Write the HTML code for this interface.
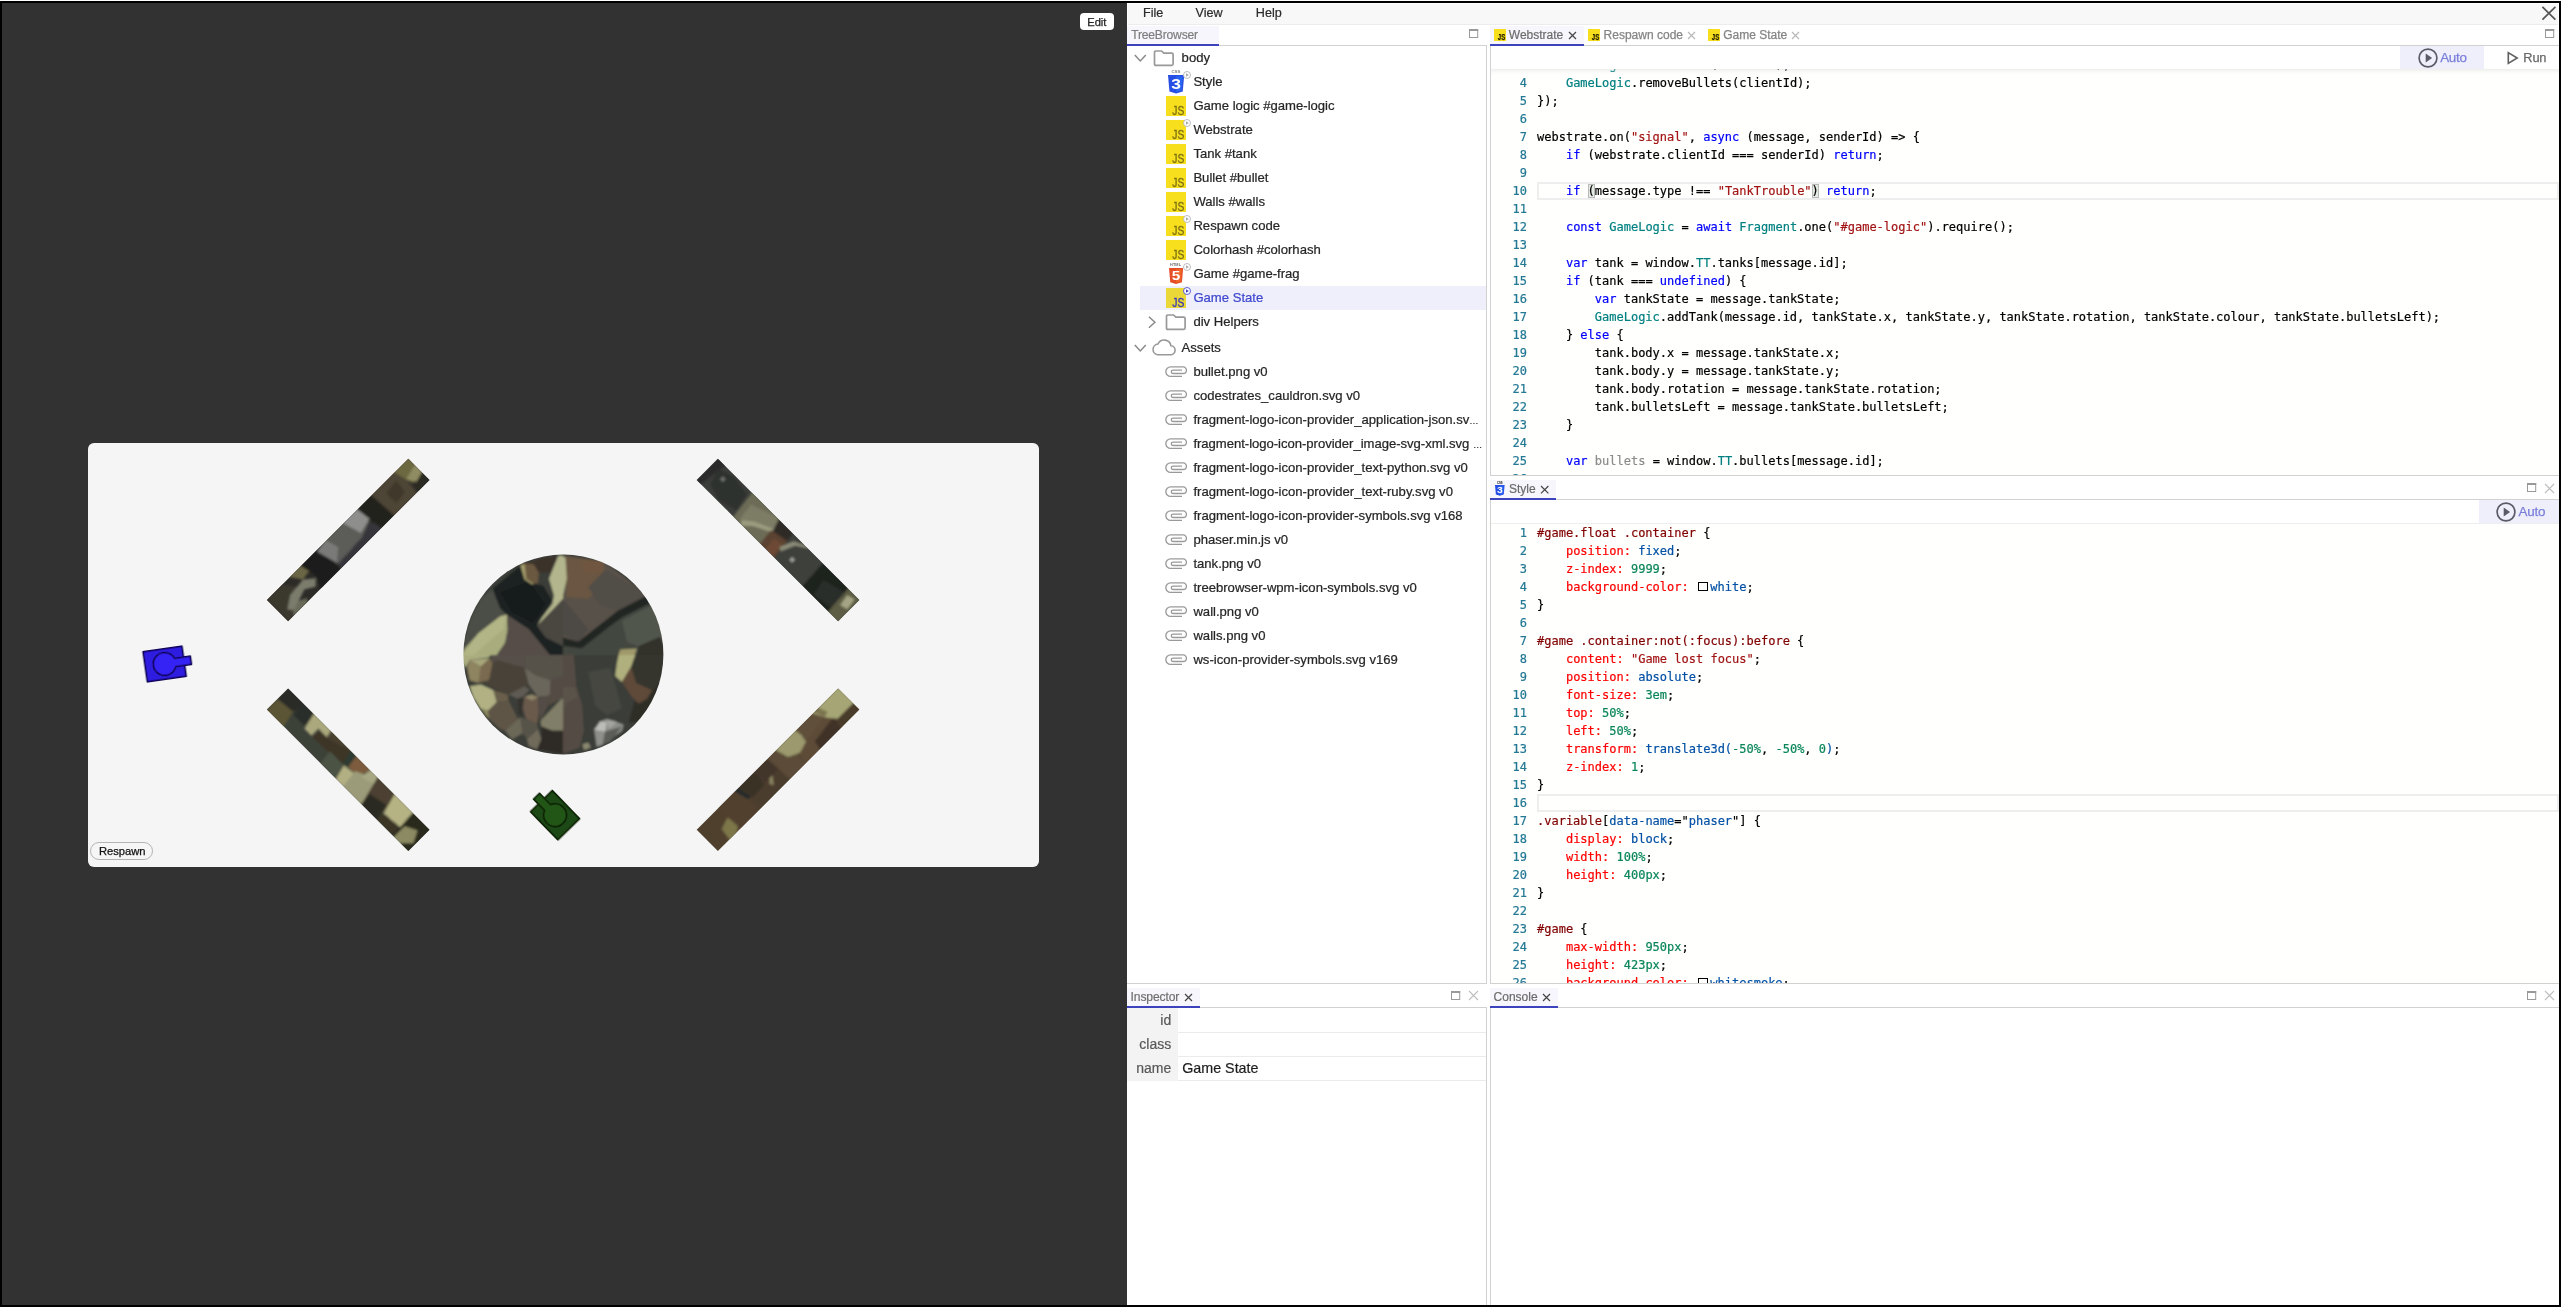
<!DOCTYPE html>
<html lang="en"><head><meta charset="utf-8"><title>TankTrouble - Codestrates</title><style>
html,body{margin:0;padding:0;}
body{width:2562px;height:1307px;position:relative;overflow:hidden;background:#fff;font-family:"Liberation Sans", Arial, Helvetica, sans-serif;}
#root{position:absolute;left:0;top:0;width:2562px;height:1307px;will-change:transform;}
.b{position:absolute;display:block;}
.t{position:absolute;white-space:pre;line-height:1em;font-family:"Liberation Sans", Arial, Helvetica, sans-serif;}
.code{position:absolute;overflow:hidden;background:#fffffe;font-family:"DejaVu Sans Mono", "Liberation Mono", monospace;font-size:12px;line-height:18px;white-space:pre;color:#000;-webkit-text-stroke:0.2px;}
.code .ln{position:absolute;left:0;width:36px;text-align:right;color:#237893;height:18px;}
.code .l{position:absolute;left:46px;height:18px;}
.k{color:#0000ff}.s{color:#a31515}.ty{color:#008080}.u{color:#8c8c8c}
.sel{color:#800000}.p{color:#ff0000}.v{color:#0451a5}.n{color:#098658}
.cur{position:absolute;left:46px;right:0;height:18px;box-sizing:border-box;border:2px solid #eeeeee;}
.br{background:#e3ebe3;box-shadow:inset 0 0 0 1px #b9b9b9;}
.sw{display:inline-block;box-sizing:border-box;width:9.6px;height:9.6px;border:1.2px solid #000;background:#fff;margin:1.2px 2.4px 0 2.4px;vertical-align:-0.2px;}
</style></head>
<body>
<div id="root">
<div class="b" style="left:0px;top:1px;width:2561px;height:1306px;background:#000;"></div>
<div class="b" style="left:2px;top:3px;width:1125px;height:1302px;background:#323232;"></div>
<div class="b" style="left:1127px;top:3px;width:1432px;height:1302px;background:#fff;"></div>
<div class="b" style="left:1080px;top:13.3px;width:34px;height:16.7px;background:#fff;border-radius:4px;"></div>
<div class="t" style="left:1087.2px;top:16.72px;font-size:11.2px;color:#222;-webkit-text-stroke:0.25px;">Edit</div>
<div class="b" style="left:88px;top:443px;width:951px;height:424px;background:#f5f5f5;border-radius:6px;overflow:hidden;"><svg class="b" style="left:0;top:0" width="951" height="424" viewBox="0 0 951 424"><defs><filter id="bl" x="-5%" y="-5%" width="110%" height="110%"><feGaussianBlur stdDeviation="1.1"/></filter><filter id="bl3" x="-5%" y="-5%" width="110%" height="110%"><feGaussianBlur stdDeviation="1.3"/></filter><filter id="blt" x="-10%" y="-10%" width="120%" height="120%"><feGaussianBlur stdDeviation="0.45"/></filter><clipPath id="cw"><rect x="-100" y="-15" width="200" height="30"/></clipPath><clipPath id="cc"><circle cx="475.4" cy="211.5" r="100"/></clipPath></defs><g transform="translate(260.2,97) rotate(-45)"><g clip-path="url(#cw)"><rect x="-102" y="-17" width="204" height="34" fill="#2d2b27"/><g filter="url(#bl)"><polygon points="-100,-16 -78,-16 -70,-4 -82,16 -100,16" fill="#3a372f" /><polygon points="-92,6 -80,-2 -60,-4 -50,4 -56,10 -66,4 -78,8 -86,14" fill="#7b7b6c" /><polygon points="-90,12 -78,8 -70,12 -74,16 -92,16" fill="#6a6a5a" /><polygon points="-68,-16 -42,-16 -48,-6 -60,-4" fill="#6b6645" /><polygon points="-52,-16 -22,-16 -26,16 -54,16 -48,2" fill="#1b1b1b" /><polygon points="-30,-12 -16,-16 32,-16 28,2 12,8 -24,10" fill="#5b5b59" /><polygon points="-30,-14 -16,-16 -12,-2 -24,8" fill="#7a7a78" /><polygon points="8,-16 30,-16 30,0 14,4" fill="#8e8e8c" /><polygon points="-24,10 12,8 28,2 34,16 -26,16" fill="#34343a" /><polygon points="28,-16 52,-16 50,16 32,16" fill="#22221f" /><polygon points="48,-16 86,-16 82,16 50,16" fill="#4d4435" /><polygon points="60,-6 76,-8 74,6 60,8" fill="#3f372c" /><polygon points="80,-16 101,-16 101,2 86,6" fill="#6c6740" /><polygon points="84,-2 101,-6 101,4 90,8" fill="#8f8b62" /><polygon points="86,8 101,4 101,16 84,16" fill="#2a2a22" /></g></g></g><g transform="translate(690,97) rotate(45)"><g clip-path="url(#cw)"><rect x="-102" y="-17" width="204" height="34" fill="#3b3d3b"/><g filter="url(#bl)"><polygon points="-92,-8 -76,-14 -54,-10 -50,8 -70,14 -88,8" fill="#2f312f" /><polygon points="-84,-6 -80,-6 -80,-2 -84,-2" fill="#6b6d6b" /><polygon points="-100,-16 -90,-16 -94,16 -100,16" fill="#2a2c2a" /><polygon points="-52,-16 -10,-16 -8,16 -48,16" fill="#6c6c56" /><polygon points="-44,-6 -16,-16 -10,-4 -30,10 -42,12" fill="#7d7d66" /><polygon points="-40,12 -30,4 -8,-6 -8,-2 -28,8 -36,16" fill="#9c9c80" /><polygon points="-14,-16 12,-16 8,-4 -10,-2" fill="#2f2c26" /><polygon points="-12,-2 8,-6 12,16 -10,16" fill="#5b4232" /><polygon points="-4,2 6,0 8,16 -2,16" fill="#6d4a34" /><polygon points="6,-16 52,-16 50,16 10,16" fill="#3d3f3b" /><polygon points="6,4 12,-10 24,-16 28,-16 16,-8 10,6" fill="#8b8b78" /><polygon points="22,2 26,2 26,6 22,6" fill="#9a9a92" /><polygon points="48,-16 88,-16 86,16 50,16" fill="#1f211e" /><polygon points="60,-4 84,-10 86,10 64,14" fill="#2b2e29" /><polygon points="84,-16 101,-16 101,16 86,16" fill="#5d5d45" /><polygon points="88,-10 96,-12 98,0 90,2" fill="#a5a585" /></g></g></g><g transform="translate(260.2,326.7) rotate(45)"><g clip-path="url(#cw)"><rect x="-102" y="-17" width="204" height="34" fill="#3d4239"/><g filter="url(#bl)"><polygon points="-100,-16 -78,-16 -80,0 -100,2" fill="#2a2c28" /><polygon points="-100,0 -80,-2 -76,16 -100,16" fill="#5c5436" /><polygon points="-80,-16 -60,-16 -62,0 -78,0" fill="#2c2f2b" /><polygon points="-64,-16 -40,-16 -38,-8 -50,-8 -50,2 -60,2" fill="#aaa87c" /><polygon points="-48,-8 -36,-8 -8,-16 -4,0 -40,2 -48,2" fill="#3d3428" /><polygon points="-40,-16 -8,-16 -36,-8" fill="#4a3f2f" /><polygon points="-26,0 0,0 2,16 -24,16" fill="#4c5244" /><polygon points="-12,-16 0,-16 2,-2 -8,0" fill="#2f3a30" /><polygon points="-4,-16 16,-16 12,-2 -2,-2" fill="#7c5b3d" /><polygon points="-6,0 8,-2 10,16 -2,16" fill="#b2b082" /><polygon points="6,-4 32,-16 34,16 8,16" fill="#9b9b79" /><polygon points="16,-16 32,-16 28,-8 14,-4" fill="#a7a783" /><polygon points="26,-16 58,-16 54,6 34,16 30,0" fill="#4b4131" /><polygon points="32,2 52,-2 56,16 34,16" fill="#2c2a20" /><polygon points="50,-16 80,-16 78,4 56,6" fill="#b5b383" /><polygon points="54,6 78,4 80,16 56,16" fill="#3a3628" /><polygon points="76,-16 101,-16 101,16 78,16" fill="#29291f" /><polygon points="80,0 92,-6 98,6 88,16 80,16" fill="#8c8a62" /></g></g></g><g transform="translate(690,326.7) rotate(-45)"><g clip-path="url(#cw)"><rect x="-102" y="-17" width="204" height="34" fill="#4f3f2d"/><g filter="url(#bl)"><polygon points="-82,2 -70,-2 -66,10 -74,16 -84,16" fill="#7c764a" /><polygon points="-70,-16 -40,-16 -42,16 -68,16" fill="#51412f" /><polygon points="-46,-16 -38,-16 -36,0 -42,0" fill="#232a2c" /><polygon points="-42,-16 -18,-16 -20,2 -38,2" fill="#3a3026" /><polygon points="-40,2 4,0 2,16 -42,16" fill="#4b3d2d" /><polygon points="-16,4 -10,-2 -8,0 -14,8" fill="#8a8460" /><polygon points="-20,-16 10,-16 4,0 -18,0" fill="#43362a" /><polygon points="0,-16 26,-16 24,16 2,16" fill="#5b4b39" /><polygon points="12,-16 42,-16 40,0 28,4 16,-2" fill="#9b996d" /><polygon points="26,4 40,0 76,-4 74,16 24,16" fill="#5d4b37" /><polygon points="40,-16 68,-16 72,-4 42,0" fill="#614f3a" /><polygon points="46,6 76,2 74,16 44,16" fill="#3f3226" /><polygon points="64,-16 101,-16 101,6 78,6 70,-4" fill="#a5a575" /><polygon points="76,6 101,6 101,16 74,16" fill="#4a3b2b" /><polygon points="66,-16 72,-16 76,-6 70,-4" fill="#7b7350" /></g></g></g><g clip-path="url(#cc)"><g filter="url(#bl3)"><rect x="360" y="97" width="230" height="230" fill="#3b3e38"/><g transform="translate(365,102) scale(0.084175)"><polygon points="100,1307 130,1150 200,900 330,640 470,520 560,750 640,830 560,850 300,1050 150,1220" fill="#4b4e46" /><polygon points="470,520 760,280 800,240 850,400 1000,470 1070,480 1180,660 1000,960 1100,1100 1307,1200 1307,1307 1150,1307 900,1000 640,830 560,750" fill="#1f2322" /><polygon points="560,560 900,430 1100,700 950,930 700,800" fill="#191d1c" /><polygon points="140,1230 300,1050 560,850 640,830 650,1000 620,1160 520,1307 100,1307" fill="#a9ad7e" /><polygon points="300,1050 560,850 640,830 600,1000 420,1150 250,1307 120,1307" fill="#b2b586" /><polygon points="640,830 900,1000 1150,1307 520,1307 620,1160 650,1000" fill="#564e48" /><polygon points="850,220 1100,150 1250,130 1150,330 1020,330" fill="#3a322c" /><polygon points="800,240 850,220 960,230 1020,330 1010,450 960,460 870,400 830,300" fill="#6b5840" /><polygon points="800,240 850,225 870,400 960,460 940,470 850,410" fill="#a39d6c" /><polygon points="1140,400 1250,130 1307,125 1307,640 1250,700 1000,960 1050,870 1180,700 1200,600" fill="#b3b58c" /><polygon points="1000,960 1250,700 1307,640 1307,1200 1100,1100" fill="#4a4641" /></g><g transform="translate(475,102) scale(0.084175)"><polygon points="0,120 500,200 1000,600 650,780 500,900 180,1150 0,1100" fill="#595148" /><polygon points="30,140 480,190 520,420 300,640 40,620" fill="#6a5743" /><polygon points="200,180 480,200 470,330 250,330" fill="#6f5640" /><polygon points="0,640 300,1000 180,1150 0,1060" fill="#4e4a44" /><polygon points="500,300 950,560 1000,600 650,780 430,700 300,500" fill="#514d46" /><polygon points="0,140 30,150 45,400 0,600" fill="#b3b58c" /><polygon points="0,1100 180,1150 500,900 650,780 1000,600 1060,680 700,860 540,980 220,1230 0,1200" fill="#222524" /><polygon points="0,1200 220,1230 540,980 700,860 1060,680 1250,1100 1307,1307 0,1307" fill="#42463f" /><polygon points="700,900 1050,720 1220,1100 1000,1250 760,1150" fill="#51564d" /><polygon points="680,1240 880,1230 850,1307 660,1307" fill="#a09a6a" /><polygon points="900,1200 1150,1090 1250,1307 880,1307" fill="#33322c" /></g><g transform="translate(365,212) scale(0.084175)"><polygon points="100,0 450,0 420,30 200,60 150,150 120,100" fill="#aaae80" /><polygon points="200,60 440,40 330,140" fill="#a7a67a" /><polygon points="170,150 200,60 330,140 440,40 470,100 430,300 300,330 200,300" fill="#7a6a50" /><polygon points="170,150 200,60 330,140 300,330 200,300" fill="#8e8460" /><polygon points="470,100 520,60 850,150 900,350 780,420 650,470 380,340 430,300" fill="#4a4238" /><polygon points="450,0 850,0 850,150 520,60 470,100" fill="#575049" /><polygon points="850,0 1307,0 1307,250 1160,300 980,240 850,150" fill="#57514a" /><polygon points="850,150 980,240 1160,300 1150,480 1010,500 900,350" fill="#6b665c" /><polygon points="1160,300 1307,250 1307,520 1290,520 1130,600 1150,480" fill="#544c45" /><polygon points="200,370 330,350 480,420 520,560 420,660 330,640 240,500" fill="#b1b184" /><polygon points="330,640 420,660 430,760 380,700" fill="#8c8a60" /><polygon points="420,660 520,560 660,540 770,760 620,900 560,880 430,760" fill="#5f5546" /><polygon points="480,420 650,470 660,540 520,560" fill="#6a5f4c" /><polygon points="660,470 850,370 910,410 830,500 770,520" fill="#5e5a52" /><polygon points="770,520 830,500 820,740 780,700" fill="#35322e" /><polygon points="850,500 930,470 1010,500 1020,680 1000,820 870,760 830,640" fill="#6a5a4c" /><polygon points="850,500 930,470 1010,500 940,540" fill="#8e8468" /><polygon points="1010,500 1150,480 1130,600 1040,780 1020,680" fill="#524c44" /><polygon points="1040,780 1290,520 1307,520 1307,900 1180,900 1050,850" fill="#807e68" /><polygon points="620,900 770,760 800,740 830,930 700,1000" fill="#6c6758" /><polygon points="830,930 800,740 870,760 1000,820 1010,880 880,1000" fill="#56524a" /><polygon points="880,1000 1010,880 1050,1000 1000,1120 900,1080" fill="#706a5a" /><polygon points="1050,850 1180,900 1307,900 1307,1180 1150,1150 1000,1120 1050,1000" fill="#2e2b28" /></g><g transform="translate(475,212) scale(0.084175)"><polygon points="0,0 130,0 160,370 230,600 250,900 200,1100 0,1170" fill="#544c45" /><polygon points="0,380 150,380 180,500 60,560 0,640" fill="#5a524a" /><polygon points="130,0 650,0 620,250 700,350 850,540 780,800 700,830 520,760 380,800 330,900 370,1100 200,1100 250,900 230,600 160,370" fill="#3a3d38" /><polygon points="300,200 560,150 640,420 700,640 520,720 380,600" fill="#444741" /><polygon points="660,0 860,0 810,140 700,320 620,250 640,100" fill="#b0b07e" /><polygon points="700,320 810,140 870,330 1060,420 1000,520 900,580 820,500" fill="#5f4a38" /><polygon points="860,0 1190,0 1180,300 1060,420 870,330 810,140" fill="#35342d" /><polygon points="1060,420 1180,300 1150,500 950,800 780,800 850,540 900,580 1000,520" fill="#2f2e28" /><polygon points="370,880 440,790 520,760 600,780 720,830 700,900 480,1060 400,1090" fill="#8e8e8a" /><polygon points="440,790 520,800 500,910 380,890" fill="#bcbcb8" /><polygon points="520,770 640,800 540,880" fill="#a5a5a0" /><polygon points="500,910 700,850 560,1030 470,1060" fill="#5b5b58" /><polygon points="230,1060 300,1040 330,1100 250,1130" fill="#8a8870" /></g></g></g><g transform="translate(76.65,221) rotate(-8.15)" stroke="#100650" stroke-width="1.6" stroke-linejoin="round" filter="url(#blt)"><rect x="-19.6" y="-15.3" width="39.2" height="30.6" fill="#2f1be0"/><path d="M10.6,-4.2 H26.5 V4.2 H10.6 A11.4,11.4 0 1 1 10.6,-4.2 Z" fill="#3621f4"/></g><g transform="translate(467.05,372.2) rotate(-134.2)" stroke="#071c04" stroke-width="1.6" stroke-linejoin="round" filter="url(#blt)"><rect x="-19.6" y="-15.3" width="39.2" height="30.6" fill="#1b4913"/><path d="M10.6,-4.2 H26.5 V4.2 H10.6 A11.4,11.4 0 1 1 10.6,-4.2 Z" fill="#225719"/></g></svg></div>
<div class="b" style="left:90.2px;top:842px;width:63.2px;height:18px;background:#f6f6f6;box-sizing:border-box;border:1px solid #b4b4b4;border-radius:9px;"></div>
<div class="t" style="left:98.9px;top:845.82px;font-size:11.2px;color:#111;-webkit-text-stroke:0.25px;">Respawn</div>
<div class="b" style="left:1128px;top:4px;width:1430px;height:20.4px;background:#f8f8f8;"></div>
<div class="b" style="left:1128px;top:24.2px;width:1430px;height:0.9px;background:#ececec;"></div>
<div class="t" style="left:1143.0px;top:7.33px;font-size:12.6px;color:#2a2a2a;-webkit-text-stroke:0.2px;">File</div>
<div class="t" style="left:1195.6px;top:7.33px;font-size:12.6px;color:#2a2a2a;-webkit-text-stroke:0.2px;">View</div>
<div class="t" style="left:1255.8px;top:7.33px;font-size:12.6px;color:#2a2a2a;-webkit-text-stroke:0.2px;">Help</div>
<svg class="b" style="left:2540px;top:4px;" width="18" height="18" viewBox="0 0 18 18"><path d="M2.4,2.8 L15.4,15.6 M15.4,2.8 L2.4,15.6" stroke="#555" stroke-width="1.7" fill="none"/></svg>
<div class="b" style="left:1127px;top:25.5px;width:92px;height:18.5px;background:#f6f6fc;"></div>
<div class="b" style="left:1127px;top:45px;width:360px;height:1px;background:#d1d1d1;"></div>
<div class="b" style="left:1127px;top:44px;width:92px;height:2px;background:#3d42bd;"></div>
<div class="t" style="left:1131.2px;top:28.76px;font-size:12.1px;color:#7e7e7e;letter-spacing:-0.19px;-webkit-text-stroke:0.2px;">TreeBrowser</div>
<svg class="b" style="left:1468.6px;top:28.9px;" width="10" height="10" viewBox="0 0 10 10"><rect x="0.5" y="0.5" width="8.2" height="8" fill="none" stroke="#999" stroke-width="1"/><rect x="0" y="0" width="9.2" height="2" fill="#999"/></svg>
<div class="b" style="left:1486px;top:45px;width:1px;height:939px;background:#d1d1d1;"></div>
<div class="b" style="left:1127px;top:983px;width:360px;height:1px;background:#d1d1d1;"></div>
<svg class="b" style="left:1134.2px;top:53.8px;" width="13" height="9" viewBox="0 0 13 9"><path d="M0.8,0.9 L6.3,6.9 L11.8,0.9" fill="none" stroke="#8a8a8a" stroke-width="1.5"/></svg>
<svg class="b" style="left:1153.4px;top:49.7px;" width="22" height="17" viewBox="0 0 22 17"><path d="M1.5,2.3 Q1.5,1 2.8,1 H8.6 L10.8,3.1 H18.8 Q20.1,3.1 20.1,4.4 V14.1 Q20.1,15.4 18.8,15.4 H2.8 Q1.5,15.4 1.5,14.1 Z" fill="none" stroke="#999" stroke-width="1.7" stroke-linejoin="round"/></svg>
<div class="t" style="left:1181.6px;top:50.61px;font-size:13.1px;color:#262626;-webkit-text-stroke:0.22px;">body</div>
<svg class="b" style="left:1167.9px;top:75px;" width="16.20" height="19.44" viewBox="0 0 100 117" preserveAspectRatio="none"><path d="M0,0 H100 L91,100 L50,112 L9,100 Z" fill="#264de4"/><path d="M50,8 V104 L83,94 L91,8 Z" fill="#2965f1"/><text x="50" y="86" font-family="Liberation Sans, Arial, sans-serif" font-size="90" font-weight="bold" text-anchor="middle" textLength="60" lengthAdjust="spacingAndGlyphs" fill="#fff">3</text></svg>
<div class="t" style="left:1171.4px;top:70.46px;font-size:4.3px;color:#7d7d7d;font-weight:bold;letter-spacing:0.1px;">CSS</div>
<div class="t" style="left:1193.4px;top:74.61px;font-size:13.1px;color:#262626;-webkit-text-stroke:0.22px;">Style</div>
<svg class="b" style="left:1182.1px;top:69.7px;" width="10" height="10" viewBox="0 0 10 10"><circle cx="5" cy="5" r="3.5" fill="#fff" stroke="#b5b5b5" stroke-width="0.9"/><path d="M4,3.3 L6.9,5 L4,6.7 Z" fill="#a8a8a8"/></svg>
<svg class="b" style="left:1166px;top:96px;" width="20" height="20" viewBox="0 0 20 20"><rect width="20" height="20" fill="#f7df1e"/><text x="18.3" y="18.8" text-anchor="end" font-family='Liberation Sans, Arial, Helvetica, sans-serif' font-size="13.3" textLength="12.0" lengthAdjust="spacingAndGlyphs" fill="#7d7112" stroke="#7d7112" stroke-width="0.35">JS</text></svg>
<div class="t" style="left:1193.4px;top:98.61px;font-size:13.1px;color:#262626;-webkit-text-stroke:0.22px;">Game logic #game-logic</div>
<svg class="b" style="left:1166px;top:120px;" width="20" height="20" viewBox="0 0 20 20"><rect width="20" height="20" fill="#f7df1e"/><text x="18.3" y="18.8" text-anchor="end" font-family='Liberation Sans, Arial, Helvetica, sans-serif' font-size="13.3" textLength="12.0" lengthAdjust="spacingAndGlyphs" fill="#7d7112" stroke="#7d7112" stroke-width="0.35">JS</text></svg>
<div class="t" style="left:1193.4px;top:122.61px;font-size:13.1px;color:#262626;-webkit-text-stroke:0.22px;">Webstrate</div>
<svg class="b" style="left:1182.1px;top:117.7px;" width="10" height="10" viewBox="0 0 10 10"><circle cx="5" cy="5" r="3.5" fill="#fff" stroke="#b5b5b5" stroke-width="0.9"/><path d="M4,3.3 L6.9,5 L4,6.7 Z" fill="#a8a8a8"/></svg>
<svg class="b" style="left:1166px;top:144px;" width="20" height="20" viewBox="0 0 20 20"><rect width="20" height="20" fill="#f7df1e"/><text x="18.3" y="18.8" text-anchor="end" font-family='Liberation Sans, Arial, Helvetica, sans-serif' font-size="13.3" textLength="12.0" lengthAdjust="spacingAndGlyphs" fill="#7d7112" stroke="#7d7112" stroke-width="0.35">JS</text></svg>
<div class="t" style="left:1193.4px;top:146.61px;font-size:13.1px;color:#262626;-webkit-text-stroke:0.22px;">Tank #tank</div>
<svg class="b" style="left:1166px;top:168px;" width="20" height="20" viewBox="0 0 20 20"><rect width="20" height="20" fill="#f7df1e"/><text x="18.3" y="18.8" text-anchor="end" font-family='Liberation Sans, Arial, Helvetica, sans-serif' font-size="13.3" textLength="12.0" lengthAdjust="spacingAndGlyphs" fill="#7d7112" stroke="#7d7112" stroke-width="0.35">JS</text></svg>
<div class="t" style="left:1193.4px;top:170.61px;font-size:13.1px;color:#262626;-webkit-text-stroke:0.22px;">Bullet #bullet</div>
<svg class="b" style="left:1166px;top:192px;" width="20" height="20" viewBox="0 0 20 20"><rect width="20" height="20" fill="#f7df1e"/><text x="18.3" y="18.8" text-anchor="end" font-family='Liberation Sans, Arial, Helvetica, sans-serif' font-size="13.3" textLength="12.0" lengthAdjust="spacingAndGlyphs" fill="#7d7112" stroke="#7d7112" stroke-width="0.35">JS</text></svg>
<div class="t" style="left:1193.4px;top:194.61px;font-size:13.1px;color:#262626;-webkit-text-stroke:0.22px;">Walls #walls</div>
<svg class="b" style="left:1166px;top:216px;" width="20" height="20" viewBox="0 0 20 20"><rect width="20" height="20" fill="#f7df1e"/><text x="18.3" y="18.8" text-anchor="end" font-family='Liberation Sans, Arial, Helvetica, sans-serif' font-size="13.3" textLength="12.0" lengthAdjust="spacingAndGlyphs" fill="#7d7112" stroke="#7d7112" stroke-width="0.35">JS</text></svg>
<div class="t" style="left:1193.4px;top:218.61px;font-size:13.1px;color:#262626;-webkit-text-stroke:0.22px;">Respawn code</div>
<svg class="b" style="left:1182.1px;top:213.7px;" width="10" height="10" viewBox="0 0 10 10"><circle cx="5" cy="5" r="3.5" fill="#fff" stroke="#b5b5b5" stroke-width="0.9"/><path d="M4,3.3 L6.9,5 L4,6.7 Z" fill="#a8a8a8"/></svg>
<svg class="b" style="left:1166px;top:240px;" width="20" height="20" viewBox="0 0 20 20"><rect width="20" height="20" fill="#f7df1e"/><text x="18.3" y="18.8" text-anchor="end" font-family='Liberation Sans, Arial, Helvetica, sans-serif' font-size="13.3" textLength="12.0" lengthAdjust="spacingAndGlyphs" fill="#7d7112" stroke="#7d7112" stroke-width="0.35">JS</text></svg>
<div class="t" style="left:1193.4px;top:242.61px;font-size:13.1px;color:#262626;-webkit-text-stroke:0.22px;">Colorhash #colorhash</div>
<svg class="b" style="left:1169px;top:267.7px;" width="14.20" height="16.61" viewBox="0 0 100 117" preserveAspectRatio="none"><path d="M0,0 H100 L91,100 L50,112 L9,100 Z" fill="#e44d26"/><path d="M50,8 V104 L83,94 L91,8 Z" fill="#f16529"/><text x="50" y="86" font-family="Liberation Sans, Arial, sans-serif" font-size="90" font-weight="bold" text-anchor="middle" textLength="60" lengthAdjust="spacingAndGlyphs" fill="#fff">5</text></svg>
<div class="t" style="left:1170.0px;top:264.48px;font-size:3.8px;color:#6a6a6a;font-weight:bold;letter-spacing:0.15px;">HTML</div>
<div class="t" style="left:1193.4px;top:266.61px;font-size:13.1px;color:#262626;-webkit-text-stroke:0.22px;">Game #game-frag</div>
<svg class="b" style="left:1182.1px;top:261.7px;" width="10" height="10" viewBox="0 0 10 10"><circle cx="5" cy="5" r="3.5" fill="#fff" stroke="#b5b5b5" stroke-width="0.9"/><path d="M4,3.3 L6.9,5 L4,6.7 Z" fill="#a8a8a8"/></svg>
<div class="b" style="left:1140px;top:286px;width:346px;height:24px;background:#eeeffa;"></div>
<svg class="b" style="left:1166px;top:288px;" width="20" height="20" viewBox="0 0 20 20"><rect width="20" height="20" fill="#ead839"/><text x="18.3" y="18.8" text-anchor="end" font-family='Liberation Sans, Arial, Helvetica, sans-serif' font-size="13.3" textLength="12.0" lengthAdjust="spacingAndGlyphs" fill="#3537b8" stroke="#3537b8" stroke-width="0.35">JS</text></svg>
<div class="t" style="left:1193.4px;top:290.61px;font-size:13.1px;color:#3f46cf;-webkit-text-stroke:0.22px;">Game State</div>
<svg class="b" style="left:1182.1px;top:285.7px;" width="10" height="10" viewBox="0 0 10 10"><circle cx="5" cy="5" r="3.5" fill="#fff" stroke="#4a4fd0" stroke-width="0.9"/><path d="M4,3.3 L6.9,5 L4,6.7 Z" fill="#3d42c8"/></svg>
<svg class="b" style="left:1148.1px;top:316.2px;" width="9" height="13" viewBox="0 0 9 13"><path d="M0.9,0.8 L6.9,6.3 L0.9,11.8" fill="none" stroke="#8a8a8a" stroke-width="1.5"/></svg>
<svg class="b" style="left:1165.4px;top:313.9px;" width="22" height="17" viewBox="0 0 22 17"><path d="M1.5,2.3 Q1.5,1 2.8,1 H8.6 L10.8,3.1 H18.8 Q20.1,3.1 20.1,4.4 V14.1 Q20.1,15.4 18.8,15.4 H2.8 Q1.5,15.4 1.5,14.1 Z" fill="none" stroke="#999" stroke-width="1.7" stroke-linejoin="round"/></svg>
<div class="t" style="left:1193.4px;top:314.61px;font-size:13.1px;color:#262626;-webkit-text-stroke:0.22px;">div Helpers</div>
<svg class="b" style="left:1134.2px;top:343.8px;" width="13" height="9" viewBox="0 0 13 9"><path d="M0.8,0.9 L6.3,6.9 L11.8,0.9" fill="none" stroke="#8a8a8a" stroke-width="1.5"/></svg>
<svg class="b" style="left:1151.1px;top:339.4px;" width="26" height="18" viewBox="0 0 26 18"><path d="M6.6,15.8 H19.2 A4.5,4.5 0 0 0 19.9,6.8 A6.8,6.8 0 0 0 7,5 A5.45,5.45 0 0 0 6.6,15.8 Z" fill="none" stroke="#999" stroke-width="1.6" stroke-linejoin="round"/></svg>
<div class="t" style="left:1181.6px;top:340.61px;font-size:13.1px;color:#262626;-webkit-text-stroke:0.22px;">Assets</div>
<svg class="b" style="left:1165.1px;top:366.4px;" width="23" height="12" viewBox="0 0 23 12"><path d="M17,10.4 H5.6 A4.75,4.75 0 0 1 5.6,0.9 H18.1 A3.3,3.3 0 0 1 18.1,7.5 H8 A1.7,1.7 0 0 1 8,4.1 H17" fill="none" stroke="#9a9a9a" stroke-width="1.35"/></svg>
<div class="t" style="left:1193.4px;top:364.61px;font-size:13.1px;color:#262626;-webkit-text-stroke:0.22px;">bullet.png v0</div>
<svg class="b" style="left:1165.1px;top:390.4px;" width="23" height="12" viewBox="0 0 23 12"><path d="M17,10.4 H5.6 A4.75,4.75 0 0 1 5.6,0.9 H18.1 A3.3,3.3 0 0 1 18.1,7.5 H8 A1.7,1.7 0 0 1 8,4.1 H17" fill="none" stroke="#9a9a9a" stroke-width="1.35"/></svg>
<div class="t" style="left:1193.4px;top:388.61px;font-size:13.1px;color:#262626;-webkit-text-stroke:0.22px;">codestrates_cauldron.svg v0</div>
<svg class="b" style="left:1165.1px;top:414.4px;" width="23" height="12" viewBox="0 0 23 12"><path d="M17,10.4 H5.6 A4.75,4.75 0 0 1 5.6,0.9 H18.1 A3.3,3.3 0 0 1 18.1,7.5 H8 A1.7,1.7 0 0 1 8,4.1 H17" fill="none" stroke="#9a9a9a" stroke-width="1.35"/></svg>
<div class="t" style="left:1193.4px;top:412.61px;font-size:13.1px;color:#262626;-webkit-text-stroke:0.22px;">fragment-logo-icon-provider_application-json.sv<span style="font-size:9.3px">…</span></div>
<svg class="b" style="left:1165.1px;top:438.4px;" width="23" height="12" viewBox="0 0 23 12"><path d="M17,10.4 H5.6 A4.75,4.75 0 0 1 5.6,0.9 H18.1 A3.3,3.3 0 0 1 18.1,7.5 H8 A1.7,1.7 0 0 1 8,4.1 H17" fill="none" stroke="#9a9a9a" stroke-width="1.35"/></svg>
<div class="t" style="left:1193.4px;top:436.61px;font-size:13.1px;color:#262626;letter-spacing:-0.03px;-webkit-text-stroke:0.22px;">fragment-logo-icon-provider_image-svg-xml.svg <span style="font-size:9.3px">…</span></div>
<svg class="b" style="left:1165.1px;top:462.4px;" width="23" height="12" viewBox="0 0 23 12"><path d="M17,10.4 H5.6 A4.75,4.75 0 0 1 5.6,0.9 H18.1 A3.3,3.3 0 0 1 18.1,7.5 H8 A1.7,1.7 0 0 1 8,4.1 H17" fill="none" stroke="#9a9a9a" stroke-width="1.35"/></svg>
<div class="t" style="left:1193.4px;top:460.61px;font-size:13.1px;color:#262626;-webkit-text-stroke:0.22px;">fragment-logo-icon-provider_text-python.svg v0</div>
<svg class="b" style="left:1165.1px;top:486.4px;" width="23" height="12" viewBox="0 0 23 12"><path d="M17,10.4 H5.6 A4.75,4.75 0 0 1 5.6,0.9 H18.1 A3.3,3.3 0 0 1 18.1,7.5 H8 A1.7,1.7 0 0 1 8,4.1 H17" fill="none" stroke="#9a9a9a" stroke-width="1.35"/></svg>
<div class="t" style="left:1193.4px;top:484.61px;font-size:13.1px;color:#262626;-webkit-text-stroke:0.22px;">fragment-logo-icon-provider_text-ruby.svg v0</div>
<svg class="b" style="left:1165.1px;top:510.4px;" width="23" height="12" viewBox="0 0 23 12"><path d="M17,10.4 H5.6 A4.75,4.75 0 0 1 5.6,0.9 H18.1 A3.3,3.3 0 0 1 18.1,7.5 H8 A1.7,1.7 0 0 1 8,4.1 H17" fill="none" stroke="#9a9a9a" stroke-width="1.35"/></svg>
<div class="t" style="left:1193.4px;top:508.61px;font-size:13.1px;color:#262626;-webkit-text-stroke:0.22px;">fragment-logo-icon-provider-symbols.svg v168</div>
<svg class="b" style="left:1165.1px;top:534.4px;" width="23" height="12" viewBox="0 0 23 12"><path d="M17,10.4 H5.6 A4.75,4.75 0 0 1 5.6,0.9 H18.1 A3.3,3.3 0 0 1 18.1,7.5 H8 A1.7,1.7 0 0 1 8,4.1 H17" fill="none" stroke="#9a9a9a" stroke-width="1.35"/></svg>
<div class="t" style="left:1193.4px;top:532.61px;font-size:13.1px;color:#262626;-webkit-text-stroke:0.22px;">phaser.min.js v0</div>
<svg class="b" style="left:1165.1px;top:558.4px;" width="23" height="12" viewBox="0 0 23 12"><path d="M17,10.4 H5.6 A4.75,4.75 0 0 1 5.6,0.9 H18.1 A3.3,3.3 0 0 1 18.1,7.5 H8 A1.7,1.7 0 0 1 8,4.1 H17" fill="none" stroke="#9a9a9a" stroke-width="1.35"/></svg>
<div class="t" style="left:1193.4px;top:556.61px;font-size:13.1px;color:#262626;-webkit-text-stroke:0.22px;">tank.png v0</div>
<svg class="b" style="left:1165.1px;top:582.4px;" width="23" height="12" viewBox="0 0 23 12"><path d="M17,10.4 H5.6 A4.75,4.75 0 0 1 5.6,0.9 H18.1 A3.3,3.3 0 0 1 18.1,7.5 H8 A1.7,1.7 0 0 1 8,4.1 H17" fill="none" stroke="#9a9a9a" stroke-width="1.35"/></svg>
<div class="t" style="left:1193.4px;top:580.61px;font-size:13.1px;color:#262626;-webkit-text-stroke:0.22px;">treebrowser-wpm-icon-symbols.svg v0</div>
<svg class="b" style="left:1165.1px;top:606.4px;" width="23" height="12" viewBox="0 0 23 12"><path d="M17,10.4 H5.6 A4.75,4.75 0 0 1 5.6,0.9 H18.1 A3.3,3.3 0 0 1 18.1,7.5 H8 A1.7,1.7 0 0 1 8,4.1 H17" fill="none" stroke="#9a9a9a" stroke-width="1.35"/></svg>
<div class="t" style="left:1193.4px;top:604.61px;font-size:13.1px;color:#262626;-webkit-text-stroke:0.22px;">wall.png v0</div>
<svg class="b" style="left:1165.1px;top:630.4px;" width="23" height="12" viewBox="0 0 23 12"><path d="M17,10.4 H5.6 A4.75,4.75 0 0 1 5.6,0.9 H18.1 A3.3,3.3 0 0 1 18.1,7.5 H8 A1.7,1.7 0 0 1 8,4.1 H17" fill="none" stroke="#9a9a9a" stroke-width="1.35"/></svg>
<div class="t" style="left:1193.4px;top:628.61px;font-size:13.1px;color:#262626;-webkit-text-stroke:0.22px;">walls.png v0</div>
<svg class="b" style="left:1165.1px;top:654.4px;" width="23" height="12" viewBox="0 0 23 12"><path d="M17,10.4 H5.6 A4.75,4.75 0 0 1 5.6,0.9 H18.1 A3.3,3.3 0 0 1 18.1,7.5 H8 A1.7,1.7 0 0 1 8,4.1 H17" fill="none" stroke="#9a9a9a" stroke-width="1.35"/></svg>
<div class="t" style="left:1193.4px;top:652.61px;font-size:13.1px;color:#262626;-webkit-text-stroke:0.22px;">ws-icon-provider-symbols.svg v169</div>
<div class="b" style="left:1127px;top:988px;width:73px;height:18px;background:#f6f6fc;"></div>
<div class="b" style="left:1127px;top:1007px;width:360px;height:1px;background:#d1d1d1;"></div>
<div class="b" style="left:1127px;top:1006px;width:73px;height:2px;background:#3d42bd;"></div>
<div class="t" style="left:1130.6px;top:990.76px;font-size:12.1px;color:#707070;letter-spacing:-0.12px;-webkit-text-stroke:0.2px;">Inspector</div>
<svg class="b" style="left:1184.3px;top:992.6px;" width="9" height="9" viewBox="0 0 9 9"><path d="M1,1 L8,8 M8,1 L1,8" stroke="#444" stroke-width="1.2" fill="none"/></svg>
<svg class="b" style="left:1451px;top:990.8px;" width="10" height="10" viewBox="0 0 10 10"><rect x="0.5" y="0.5" width="8.2" height="8" fill="none" stroke="#999" stroke-width="1"/><rect x="0" y="0" width="9.2" height="2" fill="#999"/></svg>
<svg class="b" style="left:1468.2px;top:990.2px;" width="11" height="11" viewBox="0 0 11 11"><path d="M1,1 L10,10 M10,1 L1,10" stroke="#bebebe" stroke-width="1.1" fill="none"/></svg>
<div class="b" style="left:1486px;top:1007px;width:1px;height:298px;background:#d1d1d1;"></div>
<div class="b" style="left:1127px;top:1008px;width:51px;height:72.6px;background:#f3f3f3;"></div>
<div class="t" style="right:1390.8px;top:1012.75px;font-size:14px;color:#585858;-webkit-text-stroke:0.2px;">id</div>
<div class="b" style="left:1178px;top:1032px;width:308px;height:1px;background:#ebebeb;"></div>
<div class="t" style="right:1390.8px;top:1036.75px;font-size:14px;color:#585858;-webkit-text-stroke:0.2px;">class</div>
<div class="b" style="left:1178px;top:1056px;width:308px;height:1px;background:#ebebeb;"></div>
<div class="t" style="right:1390.8px;top:1060.75px;font-size:14px;color:#585858;-webkit-text-stroke:0.2px;">name</div>
<div class="b" style="left:1178px;top:1080px;width:308px;height:1px;background:#ebebeb;"></div>
<div class="t" style="left:1182.2px;top:1060.60px;font-size:14.3px;color:#1c1c1c;-webkit-text-stroke:0.2px;">Game State</div>
<div class="b" style="left:1490px;top:988px;width:68px;height:18px;background:#f6f6fc;"></div>
<div class="b" style="left:1490px;top:1007px;width:1069px;height:1px;background:#d1d1d1;"></div>
<div class="b" style="left:1490px;top:1006px;width:68px;height:2px;background:#3d42bd;"></div>
<div class="t" style="left:1493.6px;top:990.84px;font-size:12.0px;color:#6c6c6c;-webkit-text-stroke:0.2px;">Console</div>
<svg class="b" style="left:1541.8px;top:992.8px;" width="9" height="9" viewBox="0 0 9 9"><path d="M1,1 L8,8 M8,1 L1,8" stroke="#444" stroke-width="1.2" fill="none"/></svg>
<svg class="b" style="left:2526.8px;top:990.8px;" width="10" height="10" viewBox="0 0 10 10"><rect x="0.5" y="0.5" width="8.2" height="8" fill="none" stroke="#999" stroke-width="1"/><rect x="0" y="0" width="9.2" height="2" fill="#999"/></svg>
<svg class="b" style="left:2544px;top:990.2px;" width="11" height="11" viewBox="0 0 11 11"><path d="M1,1 L10,10 M10,1 L1,10" stroke="#bebebe" stroke-width="1.1" fill="none"/></svg>
<div class="b" style="left:1490px;top:1008px;width:1px;height:297px;background:#d1d1d1;"></div>
<div class="b" style="left:1490px;top:25.5px;width:94px;height:18.5px;background:#f6f6fc;"></div>
<div class="b" style="left:1490px;top:45px;width:1069px;height:1px;background:#d1d1d1;"></div>
<div class="b" style="left:1490px;top:44px;width:94px;height:2px;background:#3d42bd;"></div>
<svg class="b" style="left:1494px;top:29.2px;" width="12" height="12" viewBox="0 0 12 12"><rect width="12" height="12" fill="#f7df1e"/><text x="11.2" y="11.1" text-anchor="end" font-family='Liberation Sans, Arial, sans-serif' font-size="8.6" font-weight="bold" textLength="7.4" lengthAdjust="spacingAndGlyphs" fill="#1f1c03" stroke="#1f1c03" stroke-width="0.25">JS</text></svg>
<div class="t" style="left:1508.8px;top:29.14px;font-size:12px;color:#6c6c6c;-webkit-text-stroke:0.2px;">Webstrate</div>
<svg class="b" style="left:1568.0px;top:30.9px;" width="9.0" height="9.0" viewBox="0 0 9.0 9.0"><path d="M1,1 L8.0,8.0 M8.0,1 L1,8.0" stroke="#444" stroke-width="1.2" fill="none"/></svg>
<svg class="b" style="left:1588.2px;top:29.2px;" width="12" height="12" viewBox="0 0 12 12"><rect width="12" height="12" fill="#f7df1e"/><text x="11.2" y="11.1" text-anchor="end" font-family='Liberation Sans, Arial, sans-serif' font-size="8.6" font-weight="bold" textLength="7.4" lengthAdjust="spacingAndGlyphs" fill="#1f1c03" stroke="#1f1c03" stroke-width="0.25">JS</text></svg>
<div class="t" style="left:1603.6px;top:29.14px;font-size:12px;color:#858585;-webkit-text-stroke:0.25px;">Respawn code</div>
<svg class="b" style="left:1687.2px;top:30.9px;" width="9.0" height="9.0" viewBox="0 0 9.0 9.0"><path d="M1,1 L8.0,8.0 M8.0,1 L1,8.0" stroke="#b8b8b8" stroke-width="1.15" fill="none"/></svg>
<svg class="b" style="left:1707.8px;top:29.2px;" width="12" height="12" viewBox="0 0 12 12"><rect width="12" height="12" fill="#f7df1e"/><text x="11.2" y="11.1" text-anchor="end" font-family='Liberation Sans, Arial, sans-serif' font-size="8.6" font-weight="bold" textLength="7.4" lengthAdjust="spacingAndGlyphs" fill="#1f1c03" stroke="#1f1c03" stroke-width="0.25">JS</text></svg>
<div class="t" style="left:1723.2px;top:29.14px;font-size:12px;color:#858585;-webkit-text-stroke:0.25px;">Game State</div>
<svg class="b" style="left:1791.2px;top:30.9px;" width="9.0" height="9.0" viewBox="0 0 9.0 9.0"><path d="M1,1 L8.0,8.0 M8.0,1 L1,8.0" stroke="#b8b8b8" stroke-width="1.15" fill="none"/></svg>
<svg class="b" style="left:2544.7px;top:28.9px;" width="10" height="10" viewBox="0 0 10 10"><rect x="0.5" y="0.5" width="8.2" height="8" fill="none" stroke="#999" stroke-width="1"/><rect x="0" y="0" width="9.2" height="2" fill="#999"/></svg>
<div class="b" style="left:2400px;top:46px;width:84px;height:23px;background:#eeeffa;"></div>
<svg class="b" style="left:2417px;top:47px;" width="22" height="22" viewBox="0 0 22 22"><circle cx="11" cy="11" r="8.9" fill="none" stroke="#5b5b66" stroke-width="1.7"/><path d="M8.7,6.6 L15.1,11 L8.7,15.4 Z" fill="#5b5b66"/></svg>
<div class="t" style="left:2440.2px;top:51.46px;font-size:13.4px;color:#7a7edb;letter-spacing:-0.25px;-webkit-text-stroke:0.25px;">Auto</div>
<svg class="b" style="left:2505px;top:50px;" width="16" height="16" viewBox="0 0 16 16"><path d="M3.3,2.6 L12.2,8 L3.3,13.4 Z" fill="none" stroke="#5f5f5f" stroke-width="1.6" stroke-linejoin="miter"/></svg>
<div class="t" style="left:2523.3px;top:51.96px;font-size:12.8px;color:#686868;letter-spacing:-0.15px;-webkit-text-stroke:0.25px;">Run</div>
<div class="b" style="left:1490px;top:46px;width:1px;height:430px;background:#d1d1d1;"></div>
<div class="b" style="left:1490px;top:475px;width:1069px;height:1px;background:#d1d1d1;"></div>
<div class="code" style="left:1491px;top:69px;width:1068px;height:406px;"><div class="ln" style="top:-13px">3</div><div class="l" style="top:-13px">    <span class="ty">GameLogic</span>.removeTank(clientId);</div><div class="ln" style="top:5px">4</div><div class="l" style="top:5px">    <span class="ty">GameLogic</span>.removeBullets(clientId);</div><div class="ln" style="top:23px">5</div><div class="l" style="top:23px">});</div><div class="ln" style="top:41px">6</div><div class="l" style="top:41px"></div><div class="ln" style="top:59px">7</div><div class="l" style="top:59px">webstrate.on(<span class="s">"signal"</span>, <span class="k">async</span> (message, senderId) =&gt; {</div><div class="ln" style="top:77px">8</div><div class="l" style="top:77px">    <span class="k">if</span> (webstrate.clientId === senderId) <span class="k">return</span>;</div><div class="ln" style="top:95px">9</div><div class="l" style="top:95px"></div><div class="cur" style="top:113px"></div><div class="ln" style="top:113px">10</div><div class="l" style="top:113px">    <span class="k">if</span> <span class="br">(</span>message.type !== <span class="s">"TankTrouble"</span><span class="br">)</span> <span class="k">return</span>;</div><div class="ln" style="top:131px">11</div><div class="l" style="top:131px"></div><div class="ln" style="top:149px">12</div><div class="l" style="top:149px">    <span class="k">const</span> <span class="ty">GameLogic</span> = <span class="k">await</span> <span class="ty">Fragment</span>.one(<span class="s">"#game-logic"</span>).require();</div><div class="ln" style="top:167px">13</div><div class="l" style="top:167px"></div><div class="ln" style="top:185px">14</div><div class="l" style="top:185px">    <span class="k">var</span> tank = window.<span class="ty">TT</span>.tanks[message.id];</div><div class="ln" style="top:203px">15</div><div class="l" style="top:203px">    <span class="k">if</span> (tank === <span class="k">undefined</span>) {</div><div class="ln" style="top:221px">16</div><div class="l" style="top:221px">        <span class="k">var</span> tankState = message.tankState;</div><div class="ln" style="top:239px">17</div><div class="l" style="top:239px">        <span class="ty">GameLogic</span>.addTank(message.id, tankState.x, tankState.y, tankState.rotation, tankState.colour, tankState.bulletsLeft);</div><div class="ln" style="top:257px">18</div><div class="l" style="top:257px">    } <span class="k">else</span> {</div><div class="ln" style="top:275px">19</div><div class="l" style="top:275px">        tank.body.x = message.tankState.x;</div><div class="ln" style="top:293px">20</div><div class="l" style="top:293px">        tank.body.y = message.tankState.y;</div><div class="ln" style="top:311px">21</div><div class="l" style="top:311px">        tank.body.rotation = message.tankState.rotation;</div><div class="ln" style="top:329px">22</div><div class="l" style="top:329px">        tank.bulletsLeft = message.tankState.bulletsLeft;</div><div class="ln" style="top:347px">23</div><div class="l" style="top:347px">    }</div><div class="ln" style="top:365px">24</div><div class="l" style="top:365px"></div><div class="ln" style="top:383px">25</div><div class="l" style="top:383px">    <span class="k">var</span> <span class="u">bullets</span> = window.<span class="ty">TT</span>.bullets[message.id];</div><div class="ln" style="top:401px">26</div><div class="l" style="top:401px"></div><div class="b" style="left:0;top:0;right:0;height:6px;box-shadow:#dddddd 0 6px 6px -6px inset;"></div></div>
<div class="b" style="left:1490px;top:480px;width:66px;height:18px;background:#f6f6fc;"></div>
<div class="b" style="left:1490px;top:499px;width:1069px;height:1px;background:#d1d1d1;"></div>
<div class="b" style="left:1490px;top:498px;width:66px;height:2px;background:#3d42bd;"></div>
<svg class="b" style="left:1495.0px;top:484.5px;" width="9.60" height="11.23" viewBox="0 0 100 117" preserveAspectRatio="none"><path d="M0,0 H100 L91,100 L50,112 L9,100 Z" fill="#264de4"/><path d="M50,8 V104 L83,94 L91,8 Z" fill="#2965f1"/><text x="50" y="86" font-family="Liberation Sans, Arial, sans-serif" font-size="90" font-weight="bold" text-anchor="middle" textLength="60" lengthAdjust="spacingAndGlyphs" fill="#fff">3</text></svg>
<div class="t" style="left:1497.0px;top:483.01px;font-size:2.7px;color:#000;font-weight:bold;">CSS</div>
<div class="t" style="left:1509.0px;top:482.84px;font-size:12px;color:#6c6c6c;-webkit-text-stroke:0.2px;">Style</div>
<svg class="b" style="left:1539.6px;top:484.8px;" width="9.4" height="9.4" viewBox="0 0 9.4 9.4"><path d="M1,1 L8.4,8.4 M8.4,1 L1,8.4" stroke="#444" stroke-width="1.2" fill="none"/></svg>
<svg class="b" style="left:2526.8px;top:483.2px;" width="10" height="10" viewBox="0 0 10 10"><rect x="0.5" y="0.5" width="8.2" height="8" fill="none" stroke="#999" stroke-width="1"/><rect x="0" y="0" width="9.2" height="2" fill="#999"/></svg>
<svg class="b" style="left:2544px;top:482.6px;" width="11" height="11" viewBox="0 0 11 11"><path d="M1,1 L10,10 M10,1 L1,10" stroke="#bebebe" stroke-width="1.1" fill="none"/></svg>
<div class="b" style="left:2479px;top:500px;width:80px;height:23px;background:#eeeffa;"></div>
<svg class="b" style="left:2495.2px;top:500.8px;" width="22" height="22" viewBox="0 0 22 22"><circle cx="11" cy="11" r="8.9" fill="none" stroke="#5b5b66" stroke-width="1.7"/><path d="M8.7,6.6 L15.1,11 L8.7,15.4 Z" fill="#5b5b66"/></svg>
<div class="t" style="left:2518.6px;top:505.26px;font-size:13.4px;color:#7a7edb;letter-spacing:-0.25px;-webkit-text-stroke:0.25px;">Auto</div>
<div class="b" style="left:1491px;top:523px;width:1068px;height:1px;background:#eeeeee;"></div>
<div class="b" style="left:1490px;top:500px;width:1px;height:484px;background:#d1d1d1;"></div>
<div class="b" style="left:1490px;top:983px;width:1069px;height:1px;background:#d1d1d1;"></div>
<div class="code" style="left:1491px;top:524px;width:1068px;height:459px;"><div class="ln" style="top:0px">1</div><div class="l" style="top:0px"><span class="sel">#game.float .container</span> {</div><div class="ln" style="top:18px">2</div><div class="l" style="top:18px">    <span class="p">position:</span> <span class="v">fixed</span>;</div><div class="ln" style="top:36px">3</div><div class="l" style="top:36px">    <span class="p">z-index:</span> <span class="n">9999</span>;</div><div class="ln" style="top:54px">4</div><div class="l" style="top:54px">    <span class="p">background-color:</span> <span class="sw"></span><span class="v">white</span>;</div><div class="ln" style="top:72px">5</div><div class="l" style="top:72px">}</div><div class="ln" style="top:90px">6</div><div class="l" style="top:90px"></div><div class="ln" style="top:108px">7</div><div class="l" style="top:108px"><span class="sel">#game .container:not(:focus):before</span> {</div><div class="ln" style="top:126px">8</div><div class="l" style="top:126px">    <span class="p">content:</span> <span class="s">"Game lost focus"</span>;</div><div class="ln" style="top:144px">9</div><div class="l" style="top:144px">    <span class="p">position:</span> <span class="v">absolute</span>;</div><div class="ln" style="top:162px">10</div><div class="l" style="top:162px">    <span class="p">font-size:</span> <span class="n">3em</span>;</div><div class="ln" style="top:180px">11</div><div class="l" style="top:180px">    <span class="p">top:</span> <span class="n">50%</span>;</div><div class="ln" style="top:198px">12</div><div class="l" style="top:198px">    <span class="p">left:</span> <span class="n">50%</span>;</div><div class="ln" style="top:216px">13</div><div class="l" style="top:216px">    <span class="p">transform:</span> <span class="v">translate3d(</span><span class="n">-50%</span>, <span class="n">-50%</span>, <span class="n">0</span><span class="v">)</span>;</div><div class="ln" style="top:234px">14</div><div class="l" style="top:234px">    <span class="p">z-index:</span> <span class="n">1</span>;</div><div class="ln" style="top:252px">15</div><div class="l" style="top:252px">}</div><div class="cur" style="top:270px"></div><div class="ln" style="top:270px">16</div><div class="l" style="top:270px"></div><div class="ln" style="top:288px">17</div><div class="l" style="top:288px"><span class="sel">.variable</span>[<span class="v">data</span><span class="v">-name</span>="<span class="v">phaser</span>"] {</div><div class="ln" style="top:306px">18</div><div class="l" style="top:306px">    <span class="p">display:</span> <span class="v">block</span>;</div><div class="ln" style="top:324px">19</div><div class="l" style="top:324px">    <span class="p">width:</span> <span class="n">100%</span>;</div><div class="ln" style="top:342px">20</div><div class="l" style="top:342px">    <span class="p">height:</span> <span class="n">400px</span>;</div><div class="ln" style="top:360px">21</div><div class="l" style="top:360px">}</div><div class="ln" style="top:378px">22</div><div class="l" style="top:378px"></div><div class="ln" style="top:396px">23</div><div class="l" style="top:396px"><span class="sel">#game</span> {</div><div class="ln" style="top:414px">24</div><div class="l" style="top:414px">    <span class="p">max-width:</span> <span class="n">950px</span>;</div><div class="ln" style="top:432px">25</div><div class="l" style="top:432px">    <span class="p">height:</span> <span class="n">423px</span>;</div><div class="ln" style="top:450px">26</div><div class="l" style="top:450px">    <span class="p">background-color:</span> <span class="sw"></span><span class="v">whitesmoke</span>;</div><div class="ln" style="top:468px">27</div><div class="l" style="top:468px">    <span class="p">border-radius:</span> <span class="n">6px</span>;</div></div>
</div>
</body></html>
